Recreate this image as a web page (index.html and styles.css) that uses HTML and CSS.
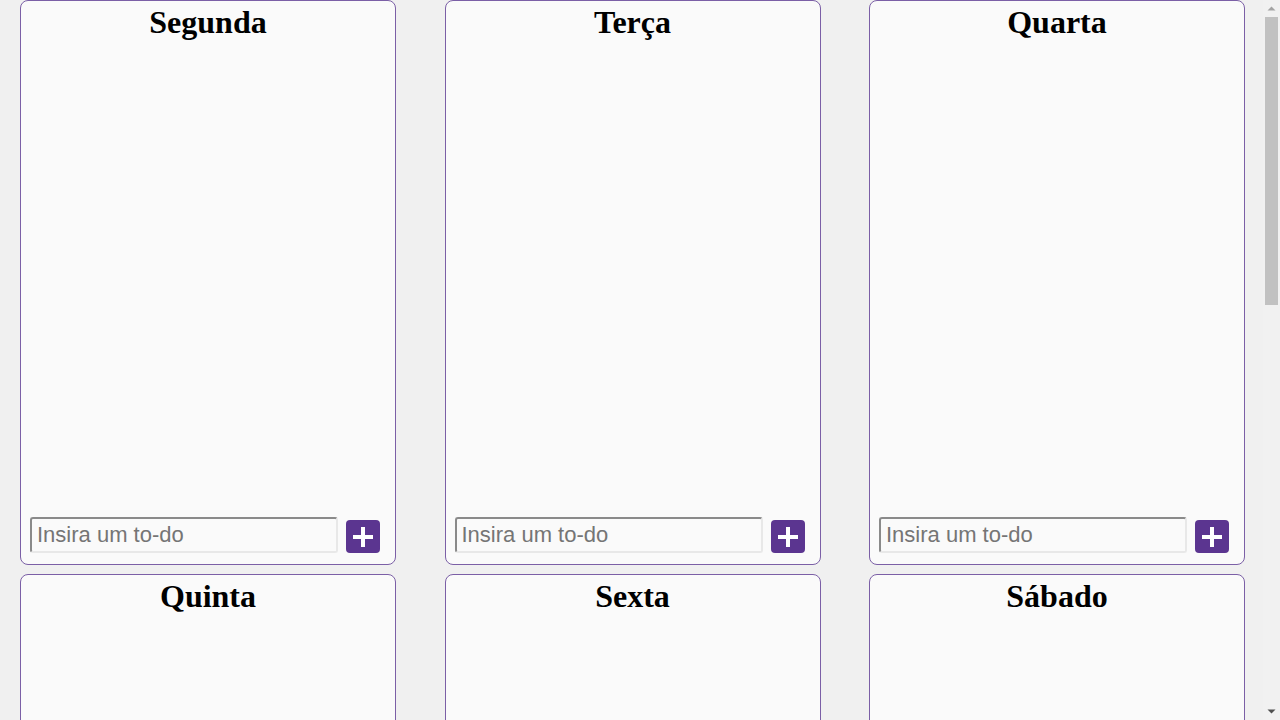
FILE: index.html
```html
<!DOCTYPE html>
<html lang="pt-BR">
<head>
<meta charset="utf-8">
<title>To-do semanal</title>
<link rel="stylesheet" href="styles.css">
</head>
<body>
<main class="week">
  <section class="day">
    <h1 class="day-title">Segunda</h1>
    <div class="day-list"></div>
    <form class="day-form">
      <input class="day-input" type="text" placeholder="Insira um to-do">
      <button class="day-add" type="button"><svg viewBox="0 0 20 20" width="20" height="20"><rect x="8" y="0" width="4" height="20" fill="#fff"/><rect x="0" y="8" width="20" height="4" fill="#fff"/></svg></button>
    </form>
  </section>
  <section class="day">
    <h1 class="day-title">Terça</h1>
    <div class="day-list"></div>
    <form class="day-form">
      <input class="day-input" type="text" placeholder="Insira um to-do">
      <button class="day-add" type="button"><svg viewBox="0 0 20 20" width="20" height="20"><rect x="8" y="0" width="4" height="20" fill="#fff"/><rect x="0" y="8" width="20" height="4" fill="#fff"/></svg></button>
    </form>
  </section>
  <section class="day">
    <h1 class="day-title">Quarta</h1>
    <div class="day-list"></div>
    <form class="day-form">
      <input class="day-input" type="text" placeholder="Insira um to-do">
      <button class="day-add" type="button"><svg viewBox="0 0 20 20" width="20" height="20"><rect x="8" y="0" width="4" height="20" fill="#fff"/><rect x="0" y="8" width="20" height="4" fill="#fff"/></svg></button>
    </form>
  </section>
  <section class="day">
    <h1 class="day-title">Quinta</h1>
    <div class="day-list"></div>
    <form class="day-form">
      <input class="day-input" type="text" placeholder="Insira um to-do">
      <button class="day-add" type="button"><svg viewBox="0 0 20 20" width="20" height="20"><rect x="8" y="0" width="4" height="20" fill="#fff"/><rect x="0" y="8" width="20" height="4" fill="#fff"/></svg></button>
    </form>
  </section>
  <section class="day">
    <h1 class="day-title">Sexta</h1>
    <div class="day-list"></div>
    <form class="day-form">
      <input class="day-input" type="text" placeholder="Insira um to-do">
      <button class="day-add" type="button"><svg viewBox="0 0 20 20" width="20" height="20"><rect x="8" y="0" width="4" height="20" fill="#fff"/><rect x="0" y="8" width="20" height="4" fill="#fff"/></svg></button>
    </form>
  </section>
  <section class="day">
    <h1 class="day-title">Sábado</h1>
    <div class="day-list"></div>
    <form class="day-form">
      <input class="day-input" type="text" placeholder="Insira um to-do">
      <button class="day-add" type="button"><svg viewBox="0 0 20 20" width="20" height="20"><rect x="8" y="0" width="4" height="20" fill="#fff"/><rect x="0" y="8" width="20" height="4" fill="#fff"/></svg></button>
    </form>
  </section>
  <section class="day">
    <h1 class="day-title">Domingo</h1>
    <div class="day-list"></div>
    <form class="day-form">
      <input class="day-input" type="text" placeholder="Insira um to-do">
      <button class="day-add" type="button"><svg viewBox="0 0 20 20" width="20" height="20"><rect x="8" y="0" width="4" height="20" fill="#fff"/><rect x="0" y="8" width="20" height="4" fill="#fff"/></svg></button>
    </form>
  </section>
</main>
<div class="scrollbar" aria-hidden="true">
  <svg class="scroll-arrow" width="17" height="17" viewBox="0 0 17 17"><polygon points="4.5,10.5 12.5,10.5 8.5,6.5" fill="#a3a3a3"/></svg>
  <div class="scroll-track"><div class="scroll-thumb"></div></div>
  <svg class="scroll-arrow" width="17" height="17" viewBox="0 0 17 17"><polygon points="4.5,6.5 12.5,6.5 8.5,10.5" fill="#505050"/></svg>
</div>
</body>
</html>
```
FILE: styles.css
```css
html {
  background: #f0f0f0;
}
body {
  margin: 0;
  background: #f0f0f0;
  font-family: "Liberation Serif", "Times New Roman", serif;
}
.week {
  display: grid;
  grid-template-columns: repeat(3, 376px);
  column-gap: 48.5px;
  row-gap: 9px;
  padding: 0 0 9px 20px;
}
.day {
  box-sizing: border-box;
  height: 565px;
  display: flex;
  flex-direction: column;
  background: #fafafa;
  border: 1px solid #7b5fa6;
  border-radius: 8px;
  padding: 3px 15px 11px 9px;
}
.day-title {
  margin: 0;
  font-size: 32px;
  font-weight: bold;
  text-align: center;
  color: #000;
  padding-left: 6px;
}
.day-list {
  flex: 1;
}
.day-form {
  display: flex;
  align-items: flex-end;
  margin: 0;
}
.day-input {
  box-sizing: border-box;
  width: 308px;
  height: 36px;
  margin: 0;
  padding: 0 5px;
  font-family: "Liberation Sans", Arial, sans-serif;
  font-size: 22px;
  color: #222;
  background: #fafafa;
  border: 2px solid;
  border-color: #8a8a8a #e8e8e8 #e8e8e8 #8a8a8a;
  border-radius: 3px;
}
.day-input::placeholder {
  color: #757575;
}
.day-add {
  box-sizing: border-box;
  width: 34px;
  height: 33px;
  margin: 0 0 0 8px;
  padding: 0;
  display: flex;
  align-items: center;
  justify-content: center;
  background: #5b3590;
  border: none;
  border-radius: 4px;
}
.day-add svg {
  display: block;
}
.scrollbar {
  position: fixed;
  top: 0;
  right: 0;
  width: 17px;
  height: 100vh;
  display: flex;
  flex-direction: column;
  background: #f1f1f1;
}
.scroll-arrow {
  display: block;
  flex: none;
}
.scroll-track {
  flex: 1;
  padding: 0 2px;
}
.scroll-thumb {
  height: 288px;
  background: #c1c1c1;
}
```
